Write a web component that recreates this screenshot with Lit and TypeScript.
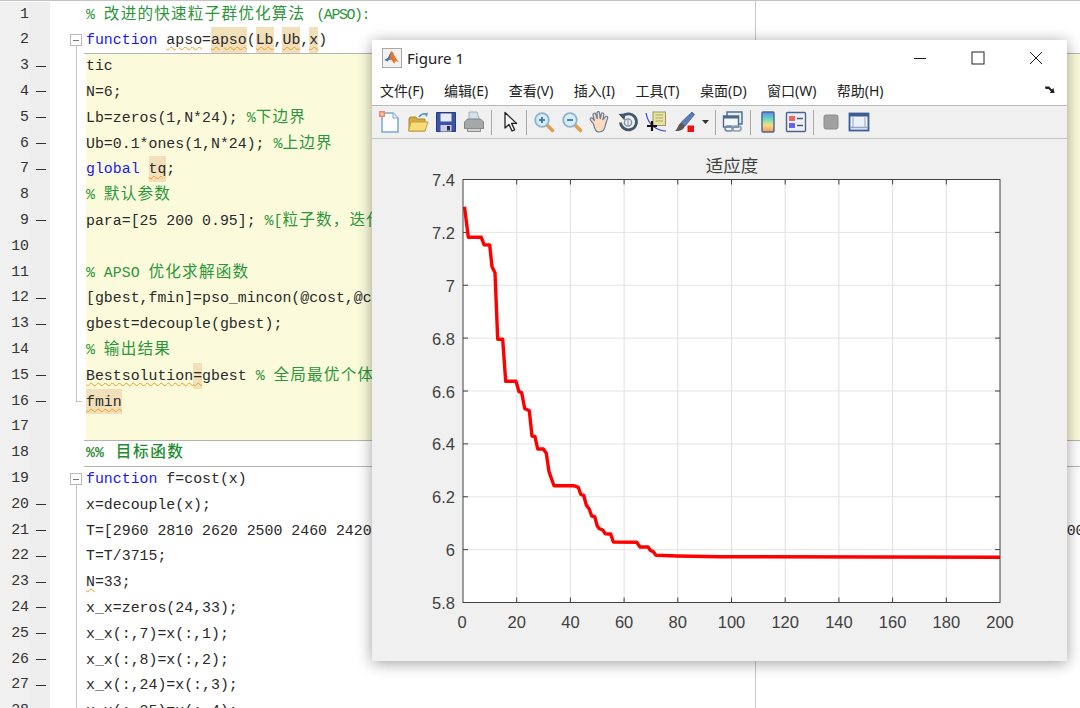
import { LitElement, html, css, svg } from "lit";
import { customElement } from "lit/decorators.js";

type Tok = [string, string?];
interface Line {
  toks: Tok[];
  dash?: boolean;
  fold?: "box" | "line" | "end";
  yellow?: boolean;
  rule?: boolean;
}

const c = "c"; // comment
const k = "k"; // keyword
const w = "w"; // orange squiggle
const hw = "h w"; // highlighted + squiggle

const LINES: Line[] = [
  { toks: [["% 改进的快速粒子群优化算法 ", c], ["(APSO):", "c tight"]] },
  {
    fold: "box",
    toks: [["function", k], [" "], ["apso", w], ["="], ["apso", hw], ["("], ["Lb", hw], [","], ["Ub", hw], [","], ["x", hw], [")"]],
  },
  { dash: true, fold: "line", yellow: true, rule: true, toks: [["tic"]] },
  { dash: true, fold: "line", yellow: true, toks: [["N=6;"]] },
  { dash: true, fold: "line", yellow: true, toks: [["Lb=zeros(1,N*24); "], ["%下边界", c]] },
  { dash: true, fold: "line", yellow: true, toks: [["Ub=0.1*ones(1,N*24); "], ["%上边界", c]] },
  { dash: true, fold: "line", yellow: true, toks: [["global", k], [" "], ["tq", hw], [";"]] },
  { fold: "line", yellow: true, toks: [["% 默认参数", c]] },
  { dash: true, fold: "line", yellow: true, toks: [["para=[25 200 0.95]; "], ["%[粒子数，迭代", c]] },
  { fold: "line", yellow: true, toks: [] },
  { fold: "line", yellow: true, toks: [["% APSO 优化求解函数", c]] },
  { dash: true, fold: "line", yellow: true, toks: [["[gbest,fmin]=pso_mincon(@cost,@c"]] },
  { dash: true, fold: "line", yellow: true, toks: [["gbest=decouple(gbest);"]] },
  { fold: "line", yellow: true, toks: [["% 输出结果", c]] },
  { dash: true, fold: "line", yellow: true, toks: [["Bestsolution", w], ["=", hw], ["gbest "], ["% 全局最优个体", c]] },
  { dash: true, fold: "end", yellow: true, toks: [["fmin", hw]] },
  { yellow: true, toks: [] },
  { rule: true, toks: [["%% 目标函数", "c b"]] },
  { fold: "box", rule: true, toks: [["function", k], [" f=cost(x)"]] },
  { dash: true, fold: "line", toks: [["x=decouple(x);"]] },
  { dash: true, fold: "line", toks: [["T=[2960 2810 2620 2500 2460 2420"], ["00", "tail"]] },
  { dash: true, fold: "line", toks: [["T=T/3715;"]] },
  { dash: true, fold: "line", toks: [["N", w], ["=33;"]] },
  { dash: true, fold: "line", toks: [["x_x=zeros(24,33);"]] },
  { dash: true, fold: "line", toks: [["x_x(:,7)=x(:,1);"]] },
  { dash: true, fold: "line", toks: [["x_x(:,8)=x(:,2);"]] },
  { dash: true, fold: "line", toks: [["x_x(:,24)=x(:,3);"]] },
  { dash: true, fold: "line", toks: [["x_x(:,25)=x(:,4);"]] },
];

const XMIN = 463;
const XMAX = 1000;
const YTOP = 179.5;
const YBOT = 602.5;
const XTICKS = [0, 20, 40, 60, 80, 100, 120, 140, 160, 180, 200];
const YTICKS = ["7.4", "7.2", "7", "6.8", "6.6", "6.4", "6.2", "6", "5.8"];

// traced off the reference, in page pixels
const CURVE =
  "464.5,206.7 468.3,237.3 481.3,237.3 484,244.7 489.7,245 492,266.7 495,272.7 497.7,339.3 502.7,339.3 " +
  "505.7,381.3 516,381.3 519,391.7 521.7,392.7 524.7,408.5 529.3,410.7 532,436 535,436.7 537.7,449 543.3,449 " +
  "546.3,453.3 549,471.7 554,485.7 574,485.7 578.3,487.3 580.7,494.3 583.7,495.3 586.3,505 589.3,509.3 " +
  "591.7,516 594.7,516.7 597.3,526 599.3,528.7 602.7,530 605.3,533.7 610.7,534 613.3,542 636.7,542.3 640,547 " +
  "648,547 650.7,550.7 653.3,551.7 656,555.3 676.7,556 720,556.7 1000,557.3";

const icon = (body: unknown) =>
  html`<span class="slot"><svg width="22" height="22" viewBox="0 0 22 22">${body}</svg></span>`;

const zoomLens = (plus: boolean) => svg`
  <path d="M13 13l6.500 6.500" stroke="#e0a050" stroke-width="3.600" stroke-linecap="round"/>
  <circle cx="9" cy="9" r="6.800" fill="#d8ecf8" stroke="#8fb2cc" stroke-width="1.800"/>
  <path d="M6 9h6" stroke="#3a74b8" stroke-width="1.800"/>
  ${plus ? svg`<path d="M9 6v6" stroke="#3a74b8" stroke-width="1.800"/>` : ""}`;

const ICONS = {
  newDoc: svg`
    <path d="M3 2h11l5 5v14H3z" fill="#fbfdff" stroke="#7fa6cc" stroke-width="1.500"/>
    <path d="M14 2v5h5" fill="#e4eef8" stroke="#7fa6cc" stroke-width="1"/>
    <rect x="0" y="0" width="6" height="6" fill="#ee8a6a"/>
    <rect x="1.500" y="1.500" width="3" height="3" fill="#f4c4a8"/>`,
  open: svg`
    <path d="M2 8l1-2h6l1 2h8v12H2z" fill="#d8a93a" stroke="#a88a3a"/>
    <path d="M1.500 20l2.500-9h17l-3 9z" fill="#f8dc78" stroke="#c4a040"/>
    <path d="M12 6q3-4 7-3" fill="none" stroke="#5a94c0" stroke-width="1.600"/>
    <path d="M21 1.500l-1 4.500-3-3z" fill="#5a94c0"/>`,
  save: svg`
    <path d="M1.500 1.500h19v19h-19z" fill="#3a52a8" stroke="#2a3a80"/>
    <rect x="5.500" y="2.500" width="11" height="8" fill="#e8eaf4"/>
    <rect x="5.500" y="14" width="11" height="6.500" fill="#c8cede"/>
    <rect x="12" y="15" width="3" height="4.500" fill="#283050"/>`,
  print: svg`
    <path d="M6 1h8l2.500 8H6z" fill="#d4e0ea" stroke="#a0b0bc"/>
    <path d="M1.500 11l3-3h13l3 3v6.500h-19z" fill="#a4a8a8" stroke="#808484"/>
    <path d="M4.500 17.500h13v3h-13z" fill="#d0d2d2" stroke="#8c8e8e"/>`,
  pointer: svg`
    <path d="M7 1.500l0 15.500 4-3.600 3 6.600 2.600-1.200-3-6.400h5z" fill="#f6f6f6" stroke="#222" stroke-width="1.300" stroke-linejoin="round"/>`,
  zoomIn: zoomLens(true),
  zoomOut: zoomLens(false),
  hand: svg`
    <path d="M4.500 13L1.500 9c-1-1.700 1-3 2.200-1.500L5.500 10 4 4c-.4-1.900 2-2.600 2.700-.9L8.300 8 8 2c0-1.900 2.500-1.900 2.600 0l.6 6 1.200-5c.4-1.800 2.800-1.100 2.500.7L13.800 9l2.400-3c1.100-1.400 3-.2 2.300 1.400L16.500 13.500c-.6 4.500-2.500 7.500-6.500 7.500-2.800 0-4-1.800-5.500-8z" fill="#fbdcc0" stroke="#6a7c96" stroke-width="1.200"/>`,
  rotate: svg`
    <path d="M5.500 5.500a8 8 0 1 1-2 6" fill="none" stroke="#44586c" stroke-width="2.800"/>
    <path d="M1.500 3l7-.5-1 7z" fill="#44586c"/>
    <circle cx="11" cy="11.500" r="3.600" fill="none" stroke="#7c90a8" stroke-width="1.400"/>
    <path d="M11 8v7" stroke="#7c90a8"/>`,
  cursor: svg`
    <rect x="8" y="1" width="12.500" height="13.500" fill="#e8e4a0" stroke="#98986a"/>
    <path d="M10.500 4h7.500M10.500 7h7.500M10.500 10h7.500" stroke="#a4a46c"/>
    <path d="M1 2q2 10 8 14t12 4" fill="none" stroke="#3a3ae0" stroke-width="1.200"/>
    <path d="M7 10v10M2 15h10" stroke="#111" stroke-width="2.200"/>`,
  brush: svg`
    <path d="M19 1l2.500 2.500-9.500 11.500-4-3.500z" fill="#5a7cb8" stroke="#44608c" stroke-width=".8"/>
    <path d="M8 11.500l4 3.500c-1 3.500-5 5.500-10 5 2.500-1.500 3-6.500 6-8.500z" fill="#58585c"/>
    <rect x="14.500" y="14.500" width="6.500" height="6.500" fill="#ee1111"/>`,
  link: svg`
    <rect x="5" y="1" width="15" height="12" fill="#e4ecf4" stroke="#4a688c" stroke-width="1.400"/>
    <rect x="1.500" y="5" width="15" height="11" fill="#f4f8fb" stroke="#4a688c" stroke-width="1.400"/>
    <rect x="1.500" y="5" width="15" height="2.500" fill="#4a688c"/>
    <rect x="3" y="15" width="8" height="5" rx="2.500" fill="none" stroke="#6a86a8" stroke-width="1.600"/>
    <rect x="10" y="15" width="9" height="5" rx="2.500" fill="none" stroke="#8a9eb8" stroke-width="1.600"/>`,
  colorbar: svg`
    <defs><linearGradient id="cb" x1="0" y1="0" x2="0" y2="1">
      <stop offset="0" stop-color="#5a8cf0"/><stop offset=".35" stop-color="#6cd8c0"/>
      <stop offset=".65" stop-color="#f4e080"/><stop offset="1" stop-color="#f49860"/>
    </linearGradient></defs>
    <rect x="5" y="1" width="12" height="20" rx="1" fill="url(#cb)" stroke="#4a6490" stroke-width="1.400"/>`,
  legend: svg`
    <rect x="1.500" y="1.500" width="19" height="19" rx="1" fill="#eef0f6" stroke="#4a6490" stroke-width="1.400"/>
    <rect x="4" y="5" width="6" height="5" fill="#f06464"/>
    <rect x="4" y="12" width="6" height="5" fill="#6464f0"/>
    <path d="M12 7.500h6M12 14.500h6" stroke="#505868" stroke-width="1.600"/>`,
  gray: svg`<rect x="4" y="4" width="14" height="14" rx="2" fill="#a0a0a0" stroke="#8c8c8c"/>`,
  win: svg`
    <rect x="1.500" y="2.500" width="19" height="17" fill="#eef2f8" stroke="#3c5c94" stroke-width="1.800"/>
    <rect x="1.500" y="2.500" width="19" height="3" fill="#3c5c94"/>
    <path d="M5 6v10M17 6v10" stroke="#8ea4c8"/>
    <path d="M2 16.500h18" stroke="#8ea4c8" stroke-width="1.500"/>`,
};

const MENUS = ["文件(F)", "编辑(E)", "查看(V)", "插入(I)", "工具(T)", "桌面(D)", "窗口(W)", "帮助(H)"];

@customElement("app-root")
export class AppRoot extends LitElement {
  static styles = css`
    :host {
      display: block;
      position: relative;
      width: 1080px;
      height: 708px;
      overflow: hidden;
      background: #fff;
    }
    .editor {
      height: 708px;
      box-sizing: border-box;
      padding-top: 0.7px;
      overflow: hidden;
      border-top: 1px solid #c4c4c4;
      background: linear-gradient(#c8c8c8, #c8c8c8) 755px 0 / 1px 100% no-repeat, #fff;
      font: 14.88px/27.8px "Liberation Mono", "Noto Sans CJK SC", monospace;
      color: #2a2a2a;
    }
    .row {
      display: flex;
      height: 25.8px;
    }
    .num {
      width: 29px;
      background: #f0f0f0;
      text-align: right;
      color: #333;
      flex: none;
      line-height: 25.8px;
    }
    .dashcol {
      width: 21px;
      flex: none;
      background: #eeeeee;
      display: flex;
      align-items: center;
    }
    .dash {
      width: 10px;
      height: 1px;
      margin-left: 7px;
      background: #333;
    }
    .fold {
      width: 34px;
      flex: none;
      display: flex;
      flex-direction: column;
    }
    .box {
      width: 10px;
      height: 10px;
      margin: 7px 0 0 20px;
      border: 1px solid #b8b8b8;
      background: #fff;
      display: flex;
      align-items: center;
      justify-content: center;
      flex: none;
    }
    .box::after {
      content: "";
      width: 6px;
      height: 1px;
      background: #777;
    }
    .line {
      flex: 1;
      margin-left: 26px;
      border-left: 1.5px solid #c2c2c2;
    }
    .end {
      height: 50%;
      width: 6px;
      margin-left: 26px;
      border-left: 1.5px solid #c2c2c2;
      border-bottom: 1px solid #c2c2c2;
      box-sizing: border-box;
    }
    .main {
      flex: 1;
      min-width: 0;
      padding-left: 2px;
      position: relative;
    }
    .rule::before {
      content: "";
      position: absolute;
      top: -0.5px;
      left: 0;
      right: 0;
      height: 1.5px;
      background: #b4b4b4;
    }
    .code {
      height: 100%;
      white-space: pre;
    }
    .yellow .code {
      background: #fbfbdc;
    }
    .c {
      color: #2c963a;
    }
    .b {
      font-weight: bold;
      color: #1f8c30;
    }
    .k {
      color: #1a1af0;
    }
    .h {
      display: inline-block;
      height: 25.8px;
      background: #f2e0ba;
    }
    .w {
      text-decoration: underline wavy #f59a1e 1px;
      text-underline-offset: 2px;
    }
    .tail {
      margin-left: 695px;
    }
    .tight {
      letter-spacing: -1.4px;
      margin-left: 2px;
    }
    .cjk {
      font-family: "Noto Sans CJK SC", sans-serif;
      font-size: 15.6px;
      line-height: 1;
      letter-spacing: 1.2px;
    }
    .b .cjk {
      font-weight: 500;
      margin-left: 3px;
      letter-spacing: 1.6px;
    }

    .window {
      position: absolute;
      left: 372px;
      top: 40px;
      width: 695px;
      height: 621px;
      display: flex;
      flex-direction: column;
      background: #fff;
      box-shadow: 0 2px 14px rgba(0, 0, 0, 0.38);
      font-family: "Noto Sans", "Noto Sans CJK SC", sans-serif;
      color: #222;
    }
    .titlebar {
      height: 36px;
      flex: none;
      display: flex;
      align-items: center;
      padding: 0 2px 0 10px;
      font-size: 15px;
    }
    .titlebar .name {
      margin-left: 5px;
      flex: 1;
    }
    .winbtn {
      width: 58px;
      height: 36px;
      display: flex;
      align-items: center;
      justify-content: center;
    }
    .menubar {
      height: 30px;
      flex: none;
      display: flex;
      align-items: center;
      gap: 20.4px;
      padding: 0 8px 2px;
      font-size: 14px;
      border-bottom: 1px solid #b8b8b8;
      box-sizing: border-box;
    }
    .menubar .arrow {
      margin-left: auto;
      display: flex;
      margin-right: 3px;
    }
    .toolbar {
      height: 33px;
      flex: none;
      box-sizing: border-box;
      display: flex;
      align-items: center;
      padding-left: 4px;
      background: #f0f0f0;
      border-bottom: 1px solid #c4c4c4;
    }
    .slot {
      width: 28px;
      display: flex;
      justify-content: center;
      flex: none;
    }
    .sep {
      width: 1px;
      height: 25px;
      margin: 0 3px;
      background: #a8a8a8;
      flex: none;
    }
    .caret {
      width: 14px;
      display: flex;
      justify-content: center;
      flex: none;
    }
    .figure {
      flex: 1;
      min-height: 0;
      background: #f0f0f0;
    }
    .figure svg {
      display: block;
    }
    .tick {
      font: 16.5px "Liberation Sans", Arial, sans-serif;
      fill: #404040;
    }
    .title {
      font: 17.5px "Noto Sans CJK SC", sans-serif;
      fill: #404040;
    }
  `;

  private renderToken(tok: Tok) {
    const parts = tok[0].split(/([\u3000-\u9fff\uff00-\uffef]+)/);
    return html`<span class=${tok[1] ?? ""}>${parts.map((p, i) =>
      i % 2 ? html`<span class="cjk">${p}</span>` : p
    )}</span>`;
  }

  private renderLine(line: Line, i: number) {
    return html`<div class="row ${line.yellow ? "yellow" : ""}">
      <div class="num">${i + 1}</div>
      <div class="dashcol">${line.dash ? html`<div class="dash"></div>` : ""}</div>
      <div class="fold">
        ${line.fold === "box" ? html`<div class="box"></div><div class="line"></div>` : ""}
        ${line.fold === "line" ? html`<div class="line"></div>` : ""}
        ${line.fold === "end" ? html`<div class="end"></div>` : ""}
      </div>
      <div class="main ${line.rule ? "rule" : ""}">
        <div class="code">${line.toks.map((t) => this.renderToken(t))}</div>
      </div>
    </div>`;
  }

  private renderChart() {
    const sx = (v: number) => XMIN + ((XMAX - XMIN) * v) / 200;
    const sy = (i: number) => YTOP + ((YBOT - YTOP) * i) / (YTICKS.length - 1);
    return svg`
      <rect x=${XMIN} y=${YTOP} width=${XMAX - XMIN} height=${YBOT - YTOP} fill="#fff"/>
      ${XTICKS.slice(1, -1).map(
        (v) => svg`<path d="M${sx(v)} ${YTOP}V${YBOT}" stroke="#e0e0e0"/>
          <path d="M${sx(v)} ${YTOP}v5M${sx(v)} ${YBOT}v-5" stroke="#404040"/>`
      )}
      ${YTICKS.slice(1, -1).map(
        (_, i) => svg`<path d="M${XMIN} ${sy(i + 1)}H${XMAX}" stroke="#e4e4e4"/>
          <path d="M${XMIN} ${sy(i + 1)}h5M${XMAX} ${sy(i + 1)}h-5" stroke="#404040"/>`
      )}
      <polyline points=${CURVE} fill="none" stroke="#ff0000" stroke-width="3.400" stroke-linejoin="round"/>
      <rect x=${XMIN} y=${YTOP} width=${XMAX - XMIN} height=${YBOT - YTOP} fill="none" stroke="#404040"/>
      ${XTICKS.map(
        (v) => svg`<text class="tick" x=${sx(v) - (v === 0 ? 1 : 0)} y="628" text-anchor="middle">${v}</text>`
      )}
      ${YTICKS.map(
        (t, i) => svg`<text class="tick" x="455" y=${sy(i) + 6.500} text-anchor="end">${t}</text>`
      )}
      <text class="title" x="732" y="172" text-anchor="middle">适应度</text>
    `;
  }

  render() {
    return html`
      <div class="editor">${LINES.map((l, i) => this.renderLine(l, i))}</div>
      <div class="window">
        <div class="titlebar">
          <svg width="20" height="20" viewBox="0 0 20 20">
            <rect x=".5" y=".5" width="19" height="19" fill="#f2f2f2" stroke="#a8a8a8"/>
            <path d="M2.500 12l3.500-2 3-6.500c1-.8 2 .5 3 3 1 2.500 3 6 5.500 8l-3.500-1.500-2 2.500-2.500-3.500z" fill="#e8762a"/>
            <path d="M2.500 12l3.500-2 3-6.500-1 7-2.500 3z" fill="#3a78b8"/>
          </svg>
          <span class="name">Figure 1</span>
          <div class="winbtn">
            <svg width="14" height="14"><path d="M1 7.500h12" stroke="#222" stroke-width="1"/></svg>
          </div>
          <div class="winbtn">
            <svg width="14" height="14"><rect x="1" y="1" width="12" height="12" fill="none" stroke="#222"/></svg>
          </div>
          <div class="winbtn">
            <svg width="14" height="14"><path d="M1 1l12 12M13 1L1 13" stroke="#222"/></svg>
          </div>
        </div>
        <div class="menubar">
          ${MENUS.map((m) => html`<span>${m}</span>`)}
          <span class="arrow">
            <svg width="11" height="9" viewBox="0 0 11 9"><path d="M0 1.500l4 0 3 3 1.500-1.500 1 5h-5l1.500-1.500-2.500-2.500-3 0z" fill="#222"/></svg>
          </span>
        </div>
        <div class="toolbar">
          ${icon(ICONS.newDoc)}${icon(ICONS.open)}${icon(ICONS.save)}${icon(ICONS.print)}
          <span class="sep"></span>
          ${icon(ICONS.pointer)}
          <span class="sep"></span>
          ${icon(ICONS.zoomIn)}${icon(ICONS.zoomOut)}${icon(ICONS.hand)}${icon(ICONS.rotate)}${icon(ICONS.cursor)}${icon(ICONS.brush)}
          <span class="caret"><svg width="7" height="4"><path d="M0 0h7L3.500 4z" fill="#333"/></svg></span>
          <span class="sep"></span>
          ${icon(ICONS.link)}
          <span class="sep"></span>
          ${icon(ICONS.colorbar)}${icon(ICONS.legend)}
          <span class="sep"></span>
          ${icon(ICONS.gray)}${icon(ICONS.win)}
        </div>
        <div class="figure">
          <svg width="695" height="522" viewBox="372 139 695 522">${this.renderChart()}</svg>
        </div>
      </div>
    `;
  }
}
